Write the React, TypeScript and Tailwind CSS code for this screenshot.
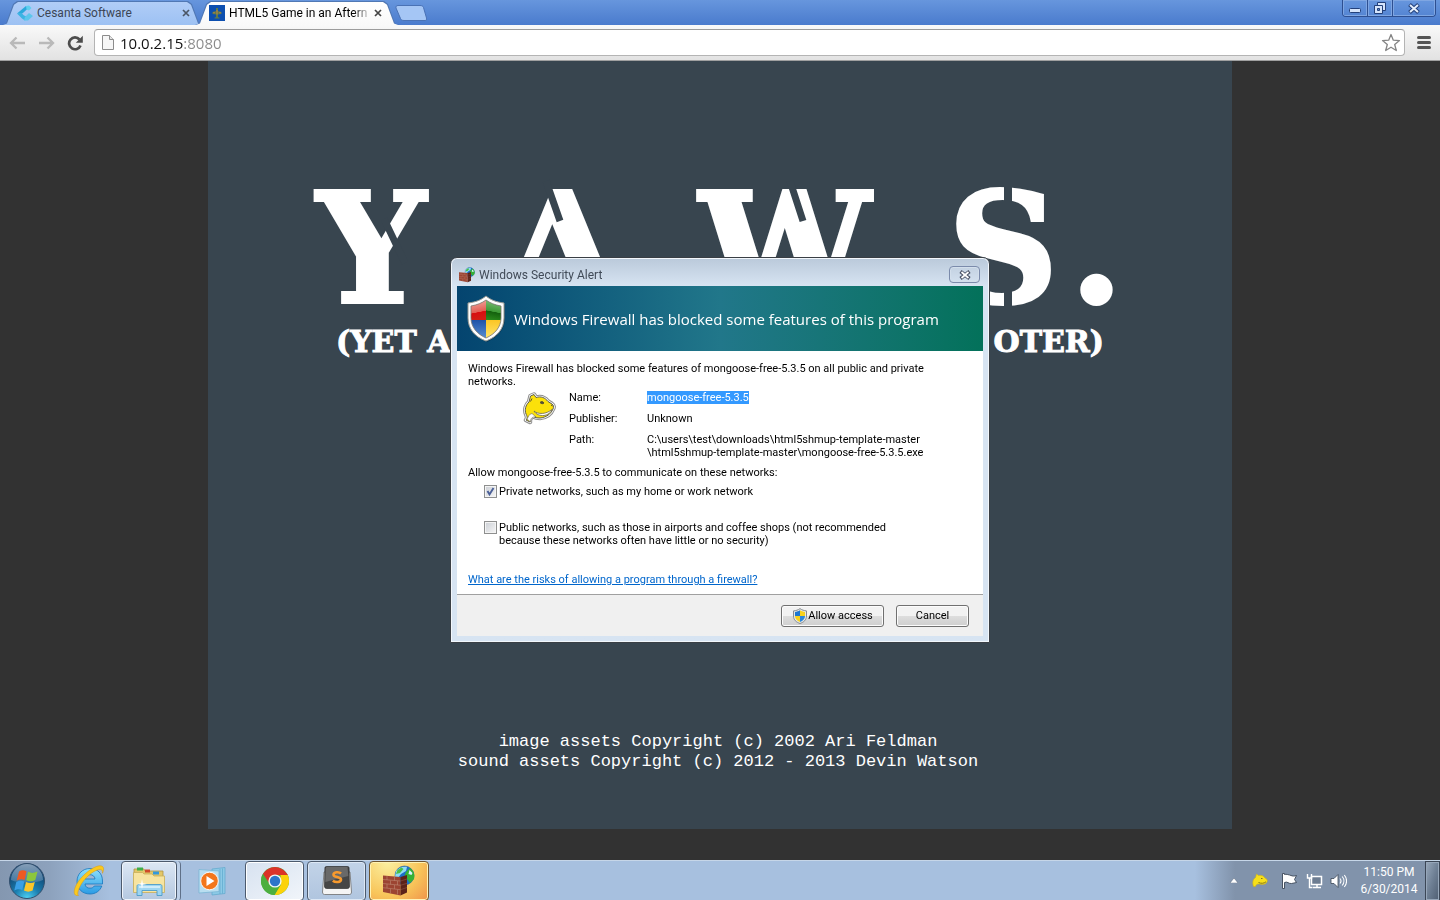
import React from "react";

const ui = "font-['Roboto','Noto_Sans',sans-serif]";

function CesantaIcon() {
  return (
    <svg viewBox="0 0 16 16" className="size-4 shrink-0" aria-hidden="true">
      <path d="M0 8.500 9 1l3 1.500-5.500 5L4.500 9z" fill="#2aa9dc" />
      <path d="M9 1l3-.5 2.500 2.500L12 5.500 9.500 4.500z" fill="#5fd0ee" />
      <path d="M0 8.500l4.500-.5 2.500 2.500 4 1.500-3 3.500L5 13.500z" fill="#3cb4e4" />
      <path d="M8 12l4-4 4 3-5 4.500H7z" fill="#5cc6ec" />
    </svg>
  );
}

function PlaneIcon() {
  return (
    <svg viewBox="0 0 16 16" className="size-4 shrink-0" aria-hidden="true">
      <rect width="16" height="16" fill="#0d4fb0" />
      <path d="M7 3h2v3l3.500 1v2L9 9.500V12l1.500.7v.8h-5v-.8L7 12V9.500L3.500 9V7L7 6z" fill="#5f7a4c" />
      <path d="M7.300 5h1.400v4.500H7.300zM4 7.300h2v1H4zM10 7.300h2v1h-2z" fill="#a8824a" />
    </svg>
  );
}

function CrossIcon({ className }: { className: string }) {
  return (
    <svg viewBox="0 0 8 8" className={className} aria-hidden="true">
      <path d="M1 1l6 6M7 1L1 7" stroke="currentColor" strokeWidth="1.700" />
    </svg>
  );
}

function BigShield() {
  return (
    <svg viewBox="0 0 40 48" className="h-12 w-10 shrink-0" aria-hidden="true">
      <defs>
        <clipPath id="shieldInner">
          <path d="M20 5c4 3 9 5 15 6v12c0 9-6 16-15 20C11 39 5 32 5 23V11c6-1 11-3 15-6z" />
        </clipPath>
        <linearGradient id="shRed" x1="0" y1="0" x2=".15" y2="1"><stop offset="0" stopColor="#f5b5ac" /><stop offset=".68" stopColor="#e25c52" /><stop offset=".7" stopColor="#d80d10" /><stop offset="1" stopColor="#d21c14" /></linearGradient>
        <linearGradient id="shGreen" x1=".15" y1="0" x2="0" y2="1"><stop offset="0" stopColor="#7fbd7a" /><stop offset=".54" stopColor="#3d9a35" /><stop offset=".56" stopColor="#14600e" /><stop offset="1" stopColor="#2c8d1c" /></linearGradient>
        <linearGradient id="shYellow" x1="0" y1="0" x2="0" y2="1"><stop offset="0" stopColor="#fbc524" /><stop offset="1" stopColor="#ffe873" /></linearGradient>
        <linearGradient id="shBlue" x1="0" y1="0" x2="0" y2="1"><stop offset="0" stopColor="#1e52a8" /><stop offset="1" stopColor="#5d94d6" /></linearGradient>
      </defs>
      <path d="M21 3c5 3 10 5 18 6v15c0 10-7 18-18 23C10 42 3 34 3 24V9c8-1 13-3 18-6z" fill="#06283f" opacity=".5" />
      <path d="M20 1c5 4 10 6 18 7v15c0 11-7 19-18 23C9 42 2 34 2 23V8c8-1 13-3 18-7z" fill="#fdfdfd" stroke="#9a9a94" />
      <g clipPath="url(#shieldInner)">
        <rect x="4" y="4" width="16" height="21" fill="url(#shRed)" />
        <rect x="20" y="4" width="16" height="21" fill="url(#shGreen)" />
        <rect x="4" y="25" width="16" height="20" fill="url(#shBlue)" />
        <rect x="20" y="25" width="16" height="20" fill="url(#shYellow)" />
      </g>
      <path d="M20 5c4 3 9 5 15 6v12c0 9-6 16-15 20C11 39 5 32 5 23V11c6-1 11-3 15-6z" fill="none" stroke="#77756d" strokeWidth=".8" />
    </svg>
  );
}

function UacShield() {
  return (
    <svg viewBox="0 0 16 16" className="size-4 shrink-0" aria-hidden="true">
      <path d="M8 .6c2 1.500 4 2 6.500 2.300V8c0 4-2.800 6.200-6.500 7.500C4.300 14.200 1.500 12 1.500 8V2.900C4 2.600 6 2.100 8 .6z" fill="#e8e8e4" stroke="#7b8188" strokeWidth=".9" />
      <path d="M8 2.300V8H3V4c2-.3 3.500-.7 5-1.700z" fill="#1f78d1" />
      <path d="M8 2.300V8h5V4c-2-.3-3.500-.7-5-1.700z" fill="#f8d21d" />
      <path d="M3 8h5v5.900C5 12.700 3 11 3 8z" fill="#f8d21d" />
      <path d="M13 8H8v5.900c3-1.200 5-2.900 5-5.900z" fill="#2a86dd" />
    </svg>
  );
}

function FirewallIcon({ className }: { className: string }) {
  return (
    <svg viewBox="0 0 32 32" className={className} aria-hidden="true">
      <circle cx="21.500" cy="10.500" r="9.500" fill="#1c6fc9" stroke="#16529b" strokeWidth=".5" />
      <path d="M13 6c3-4 8-5 11-4l-1 4-5 3-3 4-3-1z" fill="#8fdcf5" />
      <path d="M23 7l4-4c4 3 5 7 4 11l-4 4-3-4-3-2z" fill="#35b135" />
      <path d="M14.500 5l4-2.500 2 1.500-3.500 4-4 1z" fill="#4bbf45" />
      <path d="M26.500 5l3 3-1 2-3-1z" fill="#d9f2ff" />
      <path d="M0 10.500l17.500 1.500v18.500L0 27z" fill="#9c4432" />
      <path d="M17.500 12l6.500-2v17.500l-6.500 3z" fill="#5c2318" />
      <path d="M0 14.500l17.500 1.500M0 18.500l17.500 1.800M0 22.700l17.500 2M4 11v4M11.500 11.700v4M7.500 15.500v4M14.500 16v4M4 19v4M11.500 20v4M7.500 23.700v4.500M14.500 24.500v5" stroke="#c08a74" strokeWidth=".6" fill="none" />
      <path d="M17.500 16l6.500-2M17.500 20.300l6.500-2M17.500 24.700l6.500-2.200" stroke="#8f5544" strokeWidth=".6" />
    </svg>
  );
}

function MongooseIcon({ className }: { className: string }) {
  const head =
    "M4 29c2-2 1-4 0-6-1.500-4-.5-9 3-12l1.500-6L12 3.500l2 3c5-1.500 9 0 12 4l4 2.500c1.500 1 2 3 1 5-2 5-7 8.500-13 9-3 0-5-.5-7-1.500-2 .5-3.500 2.500-3 5.500z";
  return (
    <svg viewBox="0 0 34 34" className={className} aria-hidden="true">
      <path d={head} fill="#fff" stroke="#8d8d8d" strokeWidth="4.500" strokeLinejoin="round" />
      <path d={head} fill="#f4da12" stroke="#fff" strokeWidth="2.500" strokeLinejoin="round" />
      <path d={head} fill="#fbe10a" stroke="#5b5b50" strokeWidth="1" />
      <path d="M12 20c4 3.500 12 3.500 18-1.500-1 3-4 5.500-8 6-4 .3-8-1-10-4.500z" fill="#fff" stroke="#6b6650" strokeWidth=".8" />
      <path d="M5 28c2-3 2-5 5-5.500 1.500 1.500 3 2.500 4 3.500-4-.5-5.500 1.500-5.500 5z" fill="#fff" stroke="#6b6650" strokeWidth=".6" />
      <path d="M10 7.500l-1.500 3M18 11.500c1.500-1.500 3-1 4 .5-1 1-2.500 1-4-.5zM29 14l1.500 1" stroke="#555036" fill="#555036" strokeWidth="1" />
    </svg>
  );
}

function TrayMongoose() {
  return (
    <svg viewBox="0 0 16 16" className="ml-[14px] size-4" aria-hidden="true">
      <path d="M1.500 13.500C0 9.500 1 6 3.500 4.500L4.500 1l2 1.500c3-.5 5 .5 6 2L15 6.500c.7 1.500 0 3-1.500 4.200-2 1-4.500.8-6.500.3-2-.2-3 .8-3.500 2.500z" fill="#f7e01a" stroke="#c9ae1c" strokeWidth=".6" />
      <path d="M6.500 9.500c2.500 1.200 5.500 1 7.500-.7M9 5.500h1.500" stroke="#7a6d1c" strokeWidth=".9" fill="none" />
    </svg>
  );
}

function Toolbar() {
  return (
    <div className="flex h-9 shrink-0 items-center border-b border-[#a0a0a0] bg-linear-to-b from-[#f9f9f9] to-[#e2e2e2] px-2">
      <button aria-label="Back" className="flex w-[29px] items-center pl-px text-[#b9b9b9]">
        <svg viewBox="0 0 16 14" className="h-[14px] w-4"><path d="M7.500 1.500 2 7l5.500 5.500M2 7h14" stroke="currentColor" strokeWidth="2.300" fill="none" /></svg>
      </button>
      <button aria-label="Forward" className="flex w-[30px] items-center pl-[2px] text-[#b9b9b9]">
        <svg viewBox="0 0 16 14" className="h-[14px] w-4"><path d="M8.500 1.500 14 7l-5.500 5.500M14 7H0" stroke="currentColor" strokeWidth="2.300" fill="none" /></svg>
      </button>
      <button aria-label="Reload" className="flex w-[27px] items-center text-[#4c4c4c]">
        <svg viewBox="0 0 16 16" className="size-4"><path d="M13.500 10.500a5.900 5.900 0 1 1-1-6" stroke="currentColor" strokeWidth="2.700" fill="none" /><path d="M15.800.8v6.900H8.800z" fill="currentColor" /></svg>
      </button>
      <div className="flex h-[27px] flex-1 items-center rounded-sm border border-[#b4b4b4] border-t-[#9c9c9c] bg-white px-[7px]">
        <svg viewBox="0 0 12 15" className="mr-[6px] h-[15px] w-3 shrink-0" aria-hidden="true"><path d="M.5.5h7l4 4v10H.5z" fill="#f6f6f6" stroke="#8c8c8c" /><path d="M7.500.5v4h4" fill="#e4e4e4" stroke="#8c8c8c" /></svg>
        <input
          aria-label="Address"
          defaultValue="10.0.2.15:8080"
          className="min-w-0 flex-1 bg-[linear-gradient(to_right,#111_63px,#8a8a8a_63px)] bg-clip-text font-['Open_Sans',sans-serif] text-[15px] leading-5 text-transparent outline-none"
        />
        <button aria-label="Bookmark this page" className="-mr-1">
          <svg viewBox="0 0 20 19" className="h-[19px] w-5"><path d="M10 1.500l2.300 5.700 6.200.4-4.800 3.900 1.600 6L10 14.200l-5.300 3.300 1.600-6L1.500 7.600l6.200-.4z" fill="#fff" stroke="#858585" strokeWidth="1.300" strokeLinejoin="round" /></svg>
        </button>
      </div>
      <button aria-label="Menu" className="ml-3 mr-px flex w-[14px] flex-col gap-[2px]">
        <span className="h-[3px] w-full rounded-sm bg-[#555]" />
        <span className="h-[3px] w-full rounded-sm bg-[#555]" />
        <span className="h-[3px] w-full rounded-sm bg-[#555]" />
      </button>
    </div>
  );
}

const tabShape =
  "[clip-path:polygon(0_100%,4px_94%,11px_12%,15px_0,calc(100%-15px)_0,calc(100%-11px)_12%,calc(100%-4px)_94%,100%_100%)]";

function TabStrip() {
  return (
    <div className="flex h-[25px] shrink-0 items-start bg-linear-to-b from-[#6796dd] to-[#4a7bcd] pl-[2px]">
      <div role="tablist" className="flex pt-px">
        <div className="relative flex h-6 w-[201px] items-center pl-[15px]">
          <div className={tabShape + " absolute inset-0 bg-[#5078b4]"} />
          <div className={tabShape + " absolute inset-x-px top-px bottom-0 bg-linear-to-b from-[#b0cdf7] to-[#9dc1f3]"} />
          <button role="tab" aria-selected="false" className="relative flex flex-1 items-center gap-1 text-left text-[12px] leading-4 text-[#3c4656]">
            <CesantaIcon />Cesanta Software
          </button>
          <button aria-label="Close Cesanta Software" className="relative mr-[13px] text-[#4b5666]"><CrossIcon className="size-2" /></button>
        </div>
        <div className="relative -ml-2 flex h-6 w-[204px] items-center pl-[14px]">
          <div className={tabShape + " absolute inset-0 bg-[#5078b4]"} />
          <div className={tabShape + " absolute inset-x-px top-px bottom-0 bg-linear-to-b from-white to-[#f9f9f9]"} />
          <button role="tab" aria-selected="true" className="relative flex min-w-0 flex-1 items-center gap-1 text-left text-[12px] leading-4 text-black">
            <PlaneIcon />
            <span className="whitespace-nowrap [mask-image:linear-gradient(to_right,#000_90%,#0004)]">HTML5 Game in an Aftern</span>
          </button>
          <button aria-label="Close HTML5 Game" className="relative mr-[17px] text-[#444]"><CrossIcon className="size-2" /></button>
        </div>
      </div>
      <button aria-label="New tab" className="-ml-1 mt-[5px]">
        <svg viewBox="0 0 32 16" className="h-4 w-8"><path d="M3 .5h22c2 0 3 .7 3.500 2l3 10.500c.4 1.500 0 2.500-1.500 2.500H9c-2 0-3-.7-3.500-2L1 3C.5 1.500 1.500.5 3 .5z" fill="#a5c6f5" stroke="#4a72b5" /></svg>
      </button>
      <div className="mr-1 ml-auto flex h-[17px] divide-x divide-[#2d4f91] overflow-hidden rounded-b border border-t-0 border-[#2d4f91]">
        <button aria-label="Minimize" className="flex w-[25px] items-center justify-center shadow-[inset_0_0_0_1px_#7fa6e2]">
          <svg viewBox="0 0 12 5" className="mt-[4px] h-[5px] w-3"><rect x=".5" y=".5" width="11" height="4" rx="1" fill="#d5e4fb" stroke="#23407a" /></svg>
        </button>
        <button aria-label="Restore" className="flex w-[25px] items-center justify-center shadow-[inset_0_0_0_1px_#7fa6e2]">
          <svg viewBox="0 0 14 14" className="size-[14px]"><path d="M4.500 1.500h8v8h-8z" fill="#d5e4fb" stroke="#23407a" /><path d="M1.500 4.500h8v8h-8z" fill="#d5e4fb" stroke="#23407a" /><path d="M4.500 7.500h2v2h-2z" fill="#5f8ad0" stroke="#23407a" /></svg>
        </button>
        <button aria-label="Close" className="flex w-[42px] items-center justify-center shadow-[inset_0_0_0_1px_#7fa6e2]">
          <svg viewBox="0 0 12 11" className="h-[11px] w-3"><path d="M1.500 1.500l9 8M10.500 1.500l-9 8" stroke="#23407a" strokeWidth="4" /><path d="M2 2l8 7M10 2L2 9" stroke="#e4eefc" strokeWidth="2" /></svg>
        </button>
      </div>
    </div>
  );
}

function StencilBridges() {
  return (
    <svg viewBox="0 0 806 155" className="absolute bottom-0 left-0 h-[155px] w-[806px]" aria-hidden="true">
      <path d="M67 48L88 92M229 10L243 50M473 10L486 50" stroke="#38454f" strokeWidth="7" />
      <path d="M691 5V48M691 100V140" stroke="#38454f" strokeWidth="8" />
    </svg>
  );
}

function Game() {
  return (
    <main className="flex-1 overflow-hidden bg-[#323232]">
      <div className="mx-auto min-h-[768px] max-w-[1024px] bg-[#38454f] text-white">
        <h1 className="relative mx-auto flex w-[806px] justify-between pt-[110px] font-['DejaVu_Serif',serif] text-[152px] leading-[155px] font-bold [-webkit-text-stroke:4px_white]">
          <span>Y</span>
          <span>A</span>
          <span>W</span>
          <span className="flex gap-3"><span>S</span><span>.</span></span>
          <StencilBridges />
        </h1>
        <p className="mx-auto flex w-[768px] justify-between font-['DejaVu_Serif',serif] text-[30px] leading-8 font-bold [-webkit-text-stroke:1px_white]">
          <span>(YET A</span>
          <span>OTER)</span>
        </p>
        <p className="pt-[374px] pr-1 text-center font-['Liberation_Mono',monospace] text-[17px] leading-5">
          image assets Copyright (c) 2002 Ari Feldman
          <br />
          sound assets Copyright (c) 2012 - 2013 Devin Watson
        </p>
      </div>
    </main>
  );
}

const dialogButton =
  "flex h-[22px] items-center justify-center rounded-[3px] border border-[#707070] bg-linear-to-b from-[#f2f2f2] from-50% via-[#dddddd] via-50% to-[#cfcfcf] shadow-[inset_0_0_0_1px_#fcfcfc]";
const checkbox =
  "peer size-[13px] appearance-none border border-[#8e8f8f] bg-linear-to-br from-[#cbcfd5] to-[#f6f6f6] shadow-[inset_0_0_0_1px_#f4f4f4]";

function SecurityAlert() {
  return (
    <div className="pointer-events-none fixed inset-0 flex items-center justify-center">
      <section
        role="dialog"
        aria-labelledby="alert-title"
        className="pointer-events-auto w-[540px] rounded-t-[7px] border border-[#3a3f45] bg-[#d7e4f2] bg-linear-to-b from-[#bac9da] to-[#d7e4f2] to-[28px] px-[6px] pb-[6px] shadow-[inset_0_0_0_1px_#f2f7fc]"
      >
        <header className="flex h-7 items-center pt-[5px] pr-[3px] pl-[2px]">
          <FirewallIcon className="mr-1 size-4" />
          <h2 id="alert-title" className="flex-1 text-[12px] leading-4 text-[#414b58]">Windows Security Alert</h2>
          <button aria-label="Close" className="flex h-[17px] w-[31px] items-center justify-center rounded-sm border border-[#7b8bab] shadow-[inset_0_0_0_1px_#d3dfec]">
            <svg viewBox="0 0 12 10" className="h-[10px] w-3"><path d="M1.500 1.500l9 7M10.500 1.500l-9 7" stroke="#4a5266" strokeWidth="3.600" /><path d="M2.500 2l7 6M9.500 2l-7 6" stroke="#fff" strokeWidth="1.700" /></svg>
          </button>
        </header>
        <div className="flex h-[65px] items-center gap-2 bg-linear-to-r from-[#04446f] via-[#21778a] to-[#03715a] pl-[9px] font-['Open_Sans',sans-serif] text-[15px] leading-6 text-white">
          <BigShield />
          <p>Windows Firewall has blocked some features of this program</p>
        </div>
        <div className="bg-white px-[11px] pt-[11px] pb-2 text-[11px] leading-[13px] text-black">
          <p>
            Windows Firewall has blocked some features of mongoose-free-5.3.5 on all public and private
            <br />
            networks.
          </p>
          <div className="mt-[3px] flex pl-[54px]">
            <MongooseIcon className="mr-[13px] size-[34px] shrink-0" />
            <dl className="grid grid-cols-[78px_1fr] gap-y-2">
              <dt>Name:</dt>
              <dd><span className="inline-block bg-[#3399ff] text-white">mongoose-free-5.3.5</span></dd>
              <dt>Publisher:</dt>
              <dd>Unknown</dd>
              <dt>Path:</dt>
              <dd>C:\users\test\downloads\html5shmup-template-master<br />\html5shmup-template-master\mongoose-free-5.3.5.exe</dd>
            </dl>
          </div>
          <p className="mt-[7px]">Allow mongoose-free-5.3.5 to communicate on these networks:</p>
          <label className="mt-[6px] ml-4 flex gap-[2px]">
            <span className="relative flex shrink-0">
              <input type="checkbox" defaultChecked className={checkbox} />
              <svg viewBox="0 0 13 13" className="pointer-events-none absolute inset-0 hidden size-[13px] peer-checked:block"><path d="M3.500 6l2 3.500L9.500 3" stroke="#4a5f97" strokeWidth="1.900" fill="none" /></svg>
            </span>
            <span>Private networks, such as my home or work network</span>
          </label>
          <label className="mt-[23px] ml-4 flex gap-[2px]">
            <span className="relative flex shrink-0">
              <input type="checkbox" className={checkbox} />
            </span>
            <span>Public networks, such as those in airports and coffee shops (not recommended<br />because these networks often have little or no security)</span>
          </label>
          <p className="mt-[26px]"><a href="#risks" className="text-[#0066cc] underline">What are the risks of allowing a program through a firewall?</a></p>
        </div>
        <footer className="flex h-[42px] items-center justify-end gap-3 border-t border-[#a0a0a0] bg-[#f0f0f0] pr-[14px] text-[11px] leading-[13px] text-black">
          <button className={dialogButton + " w-[103px]"}><UacShield />Allow access</button>
          <button className={dialogButton + " w-[73px]"}>Cancel</button>
        </footer>
      </section>
    </div>
  );
}

function StartOrb() {
  return (
    <svg viewBox="0 0 38 38" className="size-[38px]" aria-hidden="true">
      <defs>
        <radialGradient id="orb" cx=".5" cy="1" r=".9"><stop offset="0" stopColor="#4fd3f5" /><stop offset=".4" stopColor="#1c7fb0" /><stop offset="1" stopColor="#0e3a66" /></radialGradient>
        <linearGradient id="orbGloss" x1="0" y1="0" x2="0" y2="1"><stop offset="0" stopColor="#d5e3f0" /><stop offset="1" stopColor="#5b86ac" /></linearGradient>
      </defs>
      <circle cx="19" cy="19" r="17.500" fill="url(#orb)" stroke="#33506e" />
      <path d="M3 18a16 16 0 0 1 32 0c-8 3.500-24 3.500-32 0z" fill="url(#orbGloss)" opacity=".6" />
      <path d="M11 9.500c2.500-1.500 5-1.500 7.500-.3L16.700 18c-2.500-1-5-1-8 .5z" fill="#ee5a22" />
      <path d="M20 9.800c3 1.500 5.500 1.500 9.500-.3L27.300 18c-3 1.500-6 1.500-9 .3z" fill="#8cc63c" />
      <path d="M8.300 20c3-1.500 5.500-1.500 8-.5l-2 8.500c-2.500-1.200-5-1.200-8 .5z" fill="#3a9fe6" />
      <path d="M18 20c3 1.500 6 1.300 8.800 0l-2.200 8.500c-3 1.500-6 1.500-8.600 0z" fill="#fcc62a" />
    </svg>
  );
}

function IeIcon() {
  return (
    <svg viewBox="0 0 32 32" className="size-8" aria-hidden="true">
      <defs><linearGradient id="ie" x1="0" y1="0" x2="0" y2="1"><stop offset="0" stopColor="#8fe0fc" /><stop offset="1" stopColor="#2b9be4" /></linearGradient></defs>
      <path d="M17 3.500c7.500 0 12.500 5 12.500 12.500v3H12c.3 3 2.300 4.200 5 4.200 2 0 3.500-.8 4.300-2.200h7.500C27 26 22.500 29 17 29 9.500 29 4 24 4 16.500S9.500 3.500 17 3.500zm-5 10.500h10c-.3-2.700-2.300-4.300-5-4.300S12.500 11.300 12 14z" fill="url(#ie)" stroke="#1877be" strokeWidth=".8" fillRule="evenodd" />
      <path d="M5.500 30.500C.5 31.500 0 26 3.500 19.500 8.500 10.500 19 2 26 .8c5-.5 5.500 3 3.500 7.500.5-3-1-4.300-3.500-3.800-6 1.200-14.500 8.500-18.500 16-2.500 4.500-3.500 9-2 10z" fill="#fbc91d" stroke="#d99a10" strokeWidth=".5" />
    </svg>
  );
}

function FolderIcon() {
  return (
    <svg viewBox="0 0 34 32" className="h-8 w-[34px]" aria-hidden="true">
      <path d="M2 4h10l1 2h18v20H2z" fill="#e3c768" stroke="#b09445" strokeWidth=".8" />
      <path d="M5 2.500h6v3H5z" fill="#3fae49" /><path d="M13 4.500h5v3h-5z" fill="#cf4a2a" /><path d="M21 6.500h6v3h-6z" fill="#3399dd" />
      <path d="M1.500 7.500h9L12 9h8l2 2h10.500v16.500h-31z" fill="#f7e4a0" stroke="#c8ae5b" strokeWidth=".8" />
      <path d="M5 30.500v-9c0-1.500.7-2 2-2h21c1.300 0 2 .5 2 2v9h-5v-5H10v5z" fill="#9ed6f1" stroke="#4d9cc9" strokeWidth=".9" />
      <path d="M7 22h21" stroke="#dff3fc" strokeWidth="1.500" />
      <path d="M10 14l.8 4.200 4.200.8-4.200.8L10 24l-.8-4.200L5 19l4.200-.8z" fill="#fff" />
    </svg>
  );
}

function MediaIcon() {
  return (
    <svg viewBox="0 0 30 30" className="size-[30px]" aria-hidden="true">
      <path d="M14 3l13-1.500v26L14 29z" fill="#8cc9e6" stroke="#5ea8cc" strokeWidth=".7" /><path d="M22 3v25M24.500 2.500v25" stroke="#5ea8cc" strokeWidth=".7" />
      <path d="M1 3.500l20 1.500v20.500L1 27z" fill="#b9def0" stroke="#74b3d2" strokeWidth=".7" />
      <circle cx="11.500" cy="15" r="8.800" fill="#f3761b" stroke="#fff" strokeWidth=".9" /><path d="M8.500 10l8 5-8 5z" fill="#fff" />
    </svg>
  );
}

function ChromeIcon() {
  return (
    <svg viewBox="0 0 30 30" className="size-[30px]" aria-hidden="true">
      <circle cx="15" cy="15" r="14" fill="#4caf3f" />
      <path d="M15 15L2.900 8A14 14 0 0 1 27.100 8L28 9H15z" fill="#dc3328" />
      <path d="M27.700 9A14 14 0 0 1 14.500 29L21 18.500 20.500 9z" fill="#fcd20a" />
      <path d="M2.900 8l7 11 2-8z" fill="#dc3328" />
      <path d="M2.900 8A14 14 0 0 0 14.500 29L20.500 18 10 18.500z" fill="#4caf3f" />
      <circle cx="15" cy="15" r="6.600" fill="#f4f6f4" /><circle cx="15" cy="15" r="5.200" fill="#2d74c9" />
    </svg>
  );
}

function SublimeIcon() {
  return (
    <svg viewBox="0 0 32 30" className="h-[30px] w-8" aria-hidden="true">
      <path d="M3 6h26l1.500 20c0 1.500-.8 2.500-2 2.500h-25c-1.200 0-2-1-2-2.500z" fill="#f4f4f4" stroke="#6d6d6d" strokeWidth=".8" />
      <path d="M5.500.5h21c1 0 1.500.5 1.600 1.500L28.500 20c.1 1.500-.7 2.500-2 2.500h-21c-1.300 0-2.100-1-2-2.500L3.900 2C4 1 4.500.5 5.500.5z" fill="#464646" stroke="#222" strokeWidth=".6" />
      <path d="M5.500 1h21l.8 9-23 6 .3-13.500z" fill="#777" opacity=".7" />
      <path d="M20 7.500c-2-2-7.500-1.700-7.500 1.200s7.500 1.800 7.500 4.800-5.500 3.300-8.200 1.200" stroke="#f79a2e" strokeWidth="2.600" fill="none" />
    </svg>
  );
}

function Taskbar() {
  const task = "flex h-10 items-center justify-center rounded-sm border";
  return (
    <footer className="flex h-10 shrink-0 items-center border-t border-[#c6d6e8] bg-[linear-gradient(to_right,#8497b0_0,#8da2bd_50px,#a7c0df_110px,#a7c0df_calc(100%-245px),#8193ab_calc(100%-205px),#8193ab_100%)] pl-2">
      <button aria-label="Start"><StartOrb /></button>
      <button aria-label="Internet Explorer" className="ml-[27px]"><IeIcon /></button>
      <button aria-label="Windows Explorer" className={task + " ml-4 w-[56px] border-[#4c5a6d] bg-linear-to-b from-[#dce7f4] to-[#b4c8e0] shadow-[inset_0_0_0_1px_#eef4fb]"}><FolderIcon /></button>
      <span className="h-10 w-1 rounded-r border-r border-[#5f7088] bg-[#bdd0e8]" />
      <button aria-label="Media Player" className="ml-[17px]"><MediaIcon /></button>
      <button aria-label="Google Chrome" className={task + " ml-[17px] w-[59px] border-[#4c5a6d] bg-linear-to-br from-[#d7e2f0] to-[#f1f5fa] shadow-[inset_0_0_0_1px_#fff]"}><ChromeIcon /></button>
      <button aria-label="Sublime Text" className={task + " ml-[3px] w-[59px] border-[#4c5a6d] bg-linear-to-b from-[#c2d3e8] to-[#b0c5df] shadow-[inset_0_0_0_1px_#dde8f5]"}><SublimeIcon /></button>
      <button aria-label="Windows Security Alert" className={task + " ml-[3px] w-[60px] border-[#6d5530] bg-[radial-gradient(circle_at_30%_0,#fbf0a0,#f8c55a_60%,#f0934a)] shadow-[inset_0_0_0_1px_#fff3b5]"}><FirewallIcon className="size-8" /></button>
      <div className="ml-auto flex items-center">
        <button aria-label="Show hidden icons"><svg viewBox="0 0 8 5" className="h-[5px] w-2"><path d="M0 5l4-5 4 5z" fill="#fff" stroke="#44546b" strokeWidth=".4" /></svg></button>
        <TrayMongoose />
        <svg viewBox="0 0 17 16" className="ml-[13px] h-4 w-[17px]" aria-hidden="true"><path d="M1.500.5v15h2v-6c3-1.500 4 1.500 7 1l5-1-2-3 2-4c-3 1-4 .5-5.500 0S5 .8 3.500 1.500v-1z" fill="#fff" stroke="#3a4657" strokeWidth=".9" /></svg>
        <svg viewBox="0 0 17 16" className="ml-2 h-4 w-[17px]" aria-hidden="true"><path d="M5.500 3.500h10v8h-10z" fill="#6d7d92" stroke="#fff" strokeWidth="1.500" /><path d="M7 14.500h8M11 12v2" stroke="#fff" strokeWidth="1.500" /><path d="M1.500 1v4h4V1M3.500 5v9.500h3" stroke="#fff" strokeWidth="1.400" fill="none" /></svg>
        <svg viewBox="0 0 17 16" className="ml-[7px] h-4 w-[17px]" aria-hidden="true"><path d="M1 5.500h3l4-4v13l-4-4H1z" fill="#fff" stroke="#3a4657" strokeWidth=".8" /><path d="M10 5.500c1.200 1.500 1.200 3.500 0 5M12.200 3.500c2.200 2.600 2.200 6.400 0 9M14.300 2c3 3.500 3 8.500 0 12" stroke="#fff" fill="none" strokeWidth="1.100" /></svg>
        <div className="ml-[10px] w-[64px] pt-px text-center text-[12px] leading-[17px] whitespace-nowrap text-white">
          11:50 PM<br />6/30/2014
        </div>
        <button aria-label="Show desktop" className="ml-1 h-10 w-[15px] border border-[#3b4656] bg-linear-to-br from-[#98a8bb] via-[#6e7f94] to-[#4f5e72] shadow-[inset_0_0_0_1px_#96a6b9]" />
      </div>
    </footer>
  );
}

export default function App() {
  return (
    <div className={ui + " flex h-screen flex-col overflow-hidden"}>
      <TabStrip />
      <Toolbar />
      <Game />
      <Taskbar />
      <SecurityAlert />
    </div>
  );
}
